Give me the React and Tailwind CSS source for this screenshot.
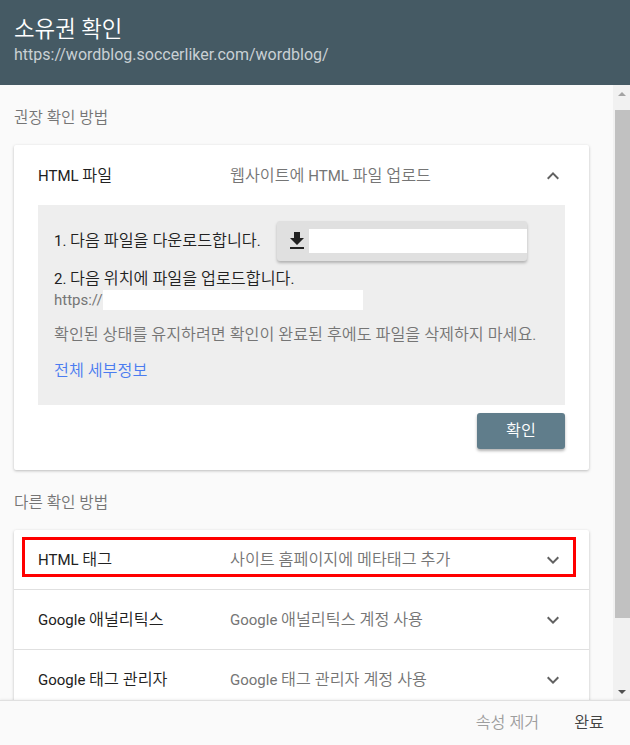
import React from "react";

const F = { fontFamily: "Roboto, 'Noto Sans CJK KR', sans-serif" };

function K({ children, big }) {
  const parts = String(children).split(/([\uAC00-\uD7A3]+(?:[ ]+[\uAC00-\uD7A3]+)*)/);
  return (
    <>
      {parts.map((p, i) =>
        /[\uAC00-\uD7A3]/.test(p) ? (
          <span key={i} className={big ? "text-[1.12em] font-[350]" : "text-[1.08em] font-[350]"}>
            {p}
          </span>
        ) : (
          <React.Fragment key={i}>{p}</React.Fragment>
        )
      )}
    </>
  );
}

function ChevronDown() {
  return (
    <svg width="24" height="24" viewBox="0 0 24 24" className="fill-[#616161]">
      <path d="M7.41 8.59L12 13.17l4.59-4.58L18 10l-6 6-6-6 1.41-1.41z" />
    </svg>
  );
}
function ChevronUp() {
  return (
    <svg width="24" height="24" viewBox="0 0 24 24" className="fill-[#616161]">
      <path d="M12 8l-6 6 1.41 1.41L12 10.83l4.59 4.58L18 14z" />
    </svg>
  );
}

function Row({ title, desc, highlight, last }) {
  return (
    <div className={"relative flex h-[60px] items-center pl-[24px] pr-[24px] " + (last ? "" : "border-b border-[#e0e0e0]")}>
      {highlight && (
        <div className="absolute left-[8px] right-[13px] top-[7px] bottom-[12px] border-[3px] border-[#ff0000]" />
      )}
      <div className="w-[192px] text-[15px] leading-[20px] text-[#212121]"><K>{title}</K></div>
      <div className="flex-1 text-[15px] leading-[20px] text-[#757575]"><K>{desc}</K></div>
      <ChevronDown />
    </div>
  );
}

export default function App() {
  return (
    <div style={F} className="flex h-[745px] w-[630px] flex-col overflow-hidden bg-[#fafafa]">
      <div className="flex h-[85px] shrink-0 flex-col bg-[#455a64] px-[14px] pt-[15px]">
        <div className="text-[20px] leading-[28px] text-white"><K big>소유권 확인</K></div>
        <div className="text-[16px] leading-[22px] text-[#c9d0d4]">https://wordblog.soccerliker.com/wordblog/</div>
      </div>
      <div className="flex min-h-0 flex-1">
        <div className="min-w-0 flex-1 overflow-hidden pl-[14px] pr-[24px]">
          <div className="pt-[24px] text-[14px] leading-[18px] text-[#757575]"><K big>권장 확인 방법</K></div>
          <div className="mt-[18px] rounded-[2px] bg-white pb-[21px] shadow-[0_1px_3px_rgba(0,0,0,0.25)]">
            <div className="flex h-[60px] items-center pl-[24px] pr-[24px] pt-[2px]">
              <div className="w-[192px] text-[15px] leading-[20px] text-[#212121]"><K>HTML 파일</K></div>
              <div className="flex-1 text-[15px] leading-[20px] text-[#757575]"><K>웹사이트에 HTML 파일 업로드</K></div>
              <ChevronUp />
            </div>
            <div className="mx-[24px] bg-[#eeeeee] px-[16px] pb-[24px] pt-[16px]">
              <div className="flex items-center">
                <div className="w-[223px] text-[15px] leading-[20px] text-[#212121]"><K>1. 다음 파일을 다운로드합니다.</K></div>
                <div className="flex h-[40px] w-[250px] items-center rounded-[3px] bg-[#e0e0e0] pl-[8px] shadow-[0_2px_3px_rgba(0,0,0,0.25)]">
                  <svg width="24" height="24" viewBox="0 0 24 24" className="fill-[#212121]">
                    <path d="M19 9h-4V3H9v6H5l7 7 7-7zM5 18v2h14v-2H5z" />
                  </svg>
                  <div className="h-[24px] flex-1 bg-white" />
                </div>
              </div>
              <div className="mt-[8px] text-[15px] leading-[20px] text-[#212121]"><K>2. 다음 위치에 파일을 업로드합니다.</K></div>
              <div className="mt-[1px] flex items-center text-[15px] leading-[20px] text-[#757575]">
                <span>https://</span>
                <div className="h-[20px] w-[260px] bg-white" />
              </div>
              <div className="mt-[15px] text-[15px] leading-[20px] text-[#757575]"><K>확인된 상태를 유지하려면 확인이 완료된 후에도 파일을 삭제하지 마세요.</K></div>
              <div className="mt-[16px] text-[15px] leading-[20px] text-[#4a7cf0]"><K>전체 세부정보</K></div>
            </div>
            <div className="mt-[8px] flex justify-end pr-[24px]">
              <div className="flex h-[36px] w-[88px] items-center justify-center rounded-[3px] bg-[#607d8b] text-[15px] text-white shadow-[0_2px_3px_rgba(0,0,0,0.3)]"><K>확인</K></div>
            </div>
          </div>
          <div className="pt-[24px] text-[14px] leading-[18px] text-[#757575]"><K big>다른 확인 방법</K></div>
          <div className="mt-[18px] rounded-[2px] bg-white shadow-[0_1px_3px_rgba(0,0,0,0.25)]">
            <Row title="HTML 태그" desc="사이트 홈페이지에 메타태그 추가" highlight />
            <Row title="Google 애널리틱스" desc="Google 애널리틱스 계정 사용" />
            <Row title="Google 태그 관리자" desc="Google 태그 관리자 계정 사용" last />
          </div>
        </div>
        <div className="flex w-[17px] shrink-0 flex-col bg-[#f1f1f1]">
          <div className="flex h-[17px] items-center justify-center">
            <div className="h-0 w-0 border-x-[4px] border-b-[4px] border-x-transparent border-b-[#a3a3a3]" />
          </div>
          <div className="ml-[2px] mt-[8px] h-[508px] bg-[#c1c1c1]" />
          <div className="flex-1" />
          <div className="flex h-[17px] items-center justify-center">
            <div className="h-0 w-0 border-x-[4px] border-t-[4px] border-x-transparent border-t-[#505050]" />
          </div>
        </div>
      </div>
      <div className="flex h-[45px] shrink-0 items-center justify-end gap-[35px] border-t border-[#e0e0e0] bg-[#fafafa] pr-[26px] shadow-[0_-1px_2px_rgba(0,0,0,0.06)]">
        <span className="text-[15px] text-[#9e9e9e]"><K>속성 제거</K></span>
        <span className="text-[15px] text-[#424242]"><K>완료</K></span>
      </div>
    </div>
  );
}
